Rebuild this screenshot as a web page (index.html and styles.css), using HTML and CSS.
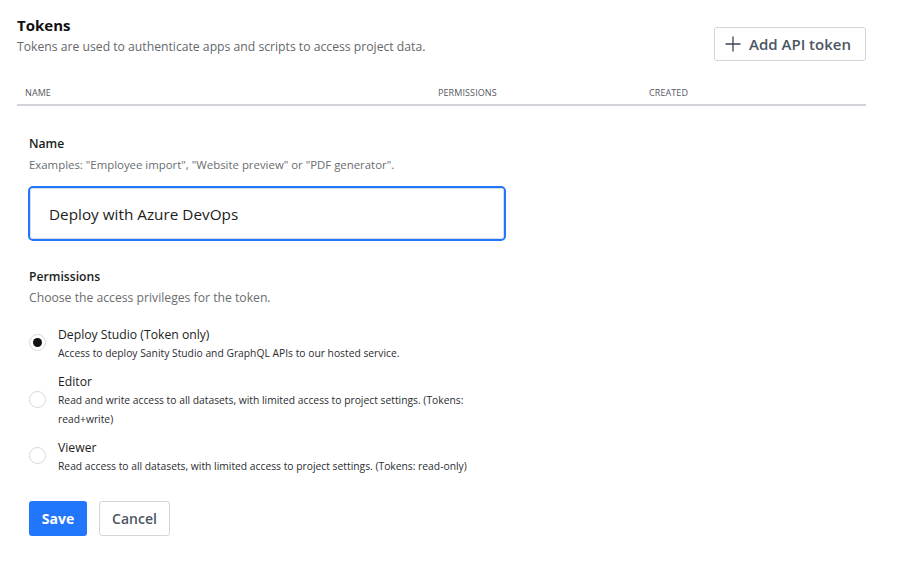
FILE: index.html
```html
<!DOCTYPE html>
<html>
<head>
<meta charset="utf-8">
<link rel="stylesheet" href="styles.css">
</head>
<body>
<div class="page">
  <div class="header">
    <div class="header-text">
      <h2 class="title">Tokens</h2>
      <p class="subtitle">Tokens are used to authenticate apps and scripts to access project data.</p>
    </div>
    <button class="btn-add">
      <svg class="plus" width="16" height="16" viewBox="0 0 16 16"><path d="M8 0.5V15.5M0.5 8H15.5" stroke="#3d4450" stroke-width="1.3" fill="none"/></svg>
      <span>Add API token</span>
    </button>
  </div>
  <div class="table-head">
    <div class="col col-name">Name</div>
    <div class="col col-perm">Permissions</div>
    <div class="col col-created">Created</div>
  </div>
  <form class="form">
    <div class="field">
      <div class="label">Name</div>
      <div class="desc">Examples: "Employee import", "Website preview" or "PDF generator".</div>
      <div class="input-wrap"><div class="input">Deploy with Azure DevOps</div></div>
    </div>
    <div class="field perms">
      <div class="label">Permissions</div>
      <div class="desc desc-lg">Choose the access privileges for the token.</div>
      <div class="options">
        <div class="option">
          <span class="radio checked"></span>
          <div class="opt-text">
            <div class="opt-title">Deploy Studio (Token only)</div>
            <div class="opt-desc">Access to deploy Sanity Studio and GraphQL APIs to our hosted service.</div>
          </div>
        </div>
        <div class="option">
          <span class="radio"></span>
          <div class="opt-text">
            <div class="opt-title">Editor</div>
            <div class="opt-desc">Read and write access to all datasets, with limited access to project settings. (Tokens: read+write)</div>
          </div>
        </div>
        <div class="option">
          <span class="radio"></span>
          <div class="opt-text">
            <div class="opt-title">Viewer</div>
            <div class="opt-desc">Read access to all datasets, with limited access to project settings. (Tokens: read-only)</div>
          </div>
        </div>
      </div>
    </div>
    <div class="actions">
      <button type="button" class="btn-save">Save</button>
      <button type="button" class="btn-cancel">Cancel</button>
    </div>
  </form>
</div>
</body>
</html>
```
FILE: styles.css
```css
* { box-sizing: border-box; }
html, body { margin: 0; padding: 0; background: #fff; }
body {
  font-family: "Open Sans", "Noto Sans", "Liberation Sans", sans-serif;
  color: #1f2226;
}
.page {
  width: 849px;
  margin-left: 17px;
  padding-top: 15px;
}
.header {
  display: flex;
  justify-content: space-between;
  align-items: flex-start;
}
.title {
  margin: 0;
  font-size: 15px;
  font-weight: 700;
  line-height: 20px;
  color: #111;
}
.subtitle {
  margin: 3px 0 0;
  font-size: 12.2px;
  line-height: 18px;
  color: #66676b;
}
.btn-add {
  margin-top: 12px;
  height: 34px;
  width: 152px;
  display: flex;
  align-items: center;
  gap: 8px;
  padding: 0 0 0 10px;
  background: #fff;
  border: 1px solid #d2d5da;
  border-radius: 3px;
  font-family: inherit;
  font-size: 15px;
  font-weight: 600;
  color: #4c5662;
}
.plus { flex: none; }
.table-head {
  margin-top: 24px;
  display: grid;
  grid-template-columns: 413px 211px 1fr;
  border-bottom: 2px solid #d0d3d8;
  height: 21px;
  padding-top: 1px;
}
.col {
  padding-left: 8px;
  font-size: 9px;
  line-height: 14px;
  text-transform: uppercase;
  color: #55585d;
  letter-spacing: 0.1px;
}
.form {
  padding-left: 12px;
  padding-top: 29px;
}
.label {
  font-size: 12.2px;
  font-weight: 600;
  line-height: 17px;
  color: #1b1d20;
}
.desc {
  margin-top: 5px;
  font-size: 11.4px;
  line-height: 16px;
  color: #6a6c70;
}
.desc-lg { font-size: 12.2px; margin-top: 5px; }
.input-wrap {
  margin-top: 13px;
  margin-left: -1px;
  width: 478px;
  height: 55px;
  border: 2px solid #2276fc;
  border-radius: 5px;
}
.input {
  height: 100%;
  border: 1px solid #d9dce0;
  border-radius: 3px;
  padding-left: 18px;
  display: flex;
  align-items: center;
  font-size: 15.3px;
  color: #1b1d20;
}
.perms { margin-top: 27px; }
.options {
  margin-top: 20px;
  display: flex;
  flex-direction: column;
  gap: 10px;
}
.option {
  display: flex;
  align-items: center;
  gap: 12px;
}
.radio {
  flex: none;
  width: 17px;
  height: 17px;
  border-radius: 50%;
  border: 1px solid #d5d8dc;
  background: #fff;
  display: flex;
  align-items: center;
  justify-content: center;
  margin-top: -4px;
}
.radio.checked::after {
  content: "";
  width: 9px;
  height: 9px;
  border-radius: 50%;
  background: #111;
}
.opt-text { width: 440px; }
.opt-title {
  font-size: 12.2px;
  line-height: 18px;
  color: #1b1d20;
}
.opt-desc {
  font-size: 10.3px;
  line-height: 19px;
  color: #2a2d31;
}
.actions {
  margin-top: 25px;
  display: flex;
  gap: 12px;
}
.btn-save {
  width: 58px;
  height: 35px;
  border: none;
  border-radius: 3px;
  background: #2276fc;
  color: #fff;
  font-family: inherit;
  font-size: 14px;
  font-weight: 700;
}
.btn-cancel {
  width: 71px;
  height: 35px;
  border: 1px solid #d2d5da;
  border-radius: 3px;
  background: #fff;
  color: #4c5662;
  font-family: inherit;
  font-size: 14px;
  font-weight: 600;
}
```
